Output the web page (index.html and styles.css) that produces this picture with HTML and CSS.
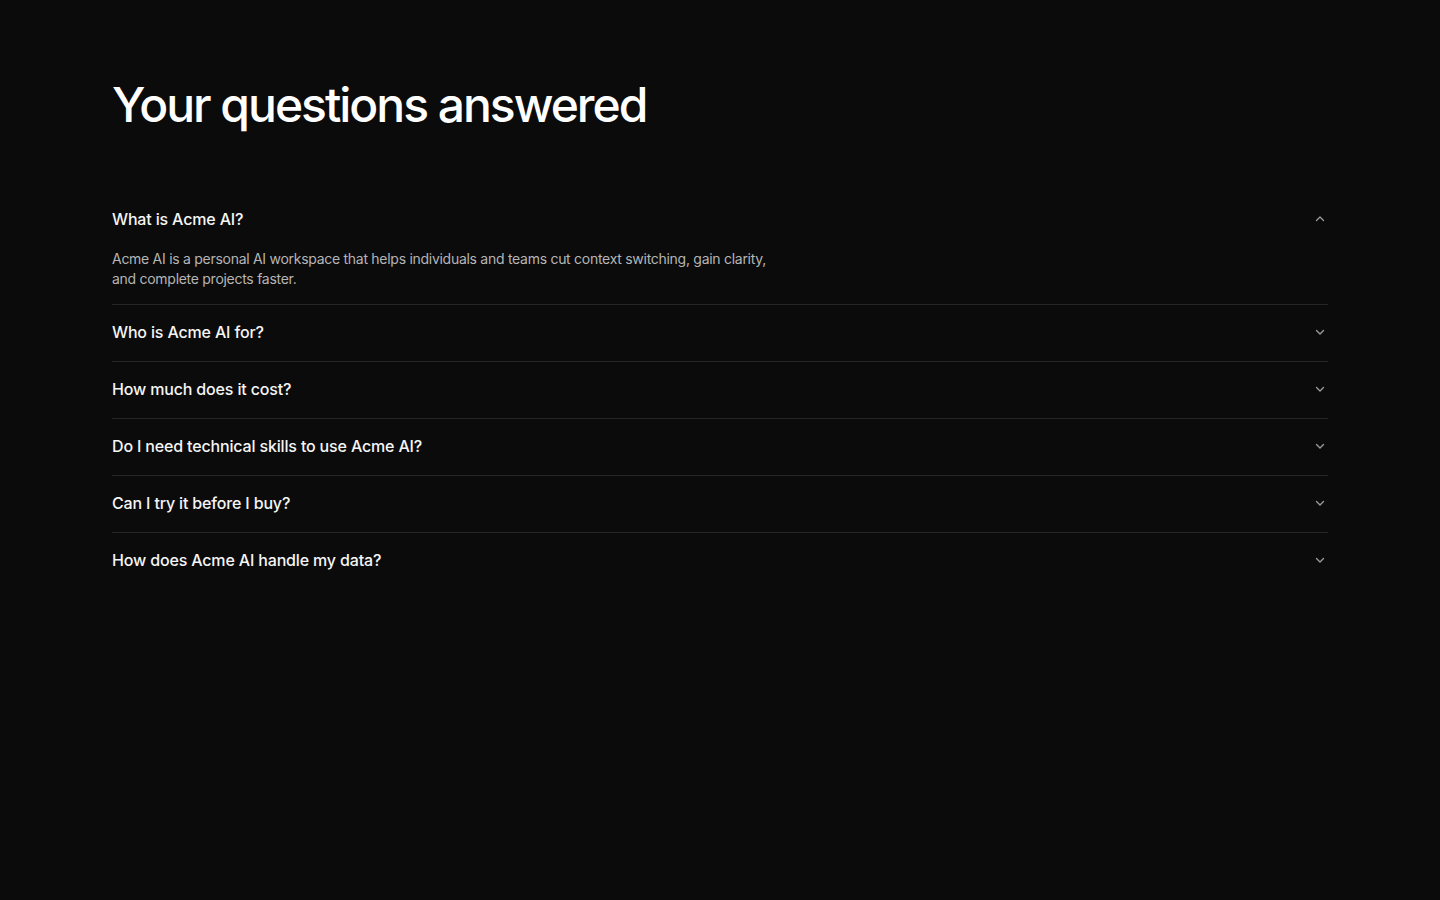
FILE: index.html
```html
<!DOCTYPE html>
<html lang="en">
<head>
<meta charset="utf-8">
<title>FAQ</title>
<link rel="stylesheet" href="styles.css">
</head>
<body>
<section class="faq">
  <h1 class="faq-title">Your questions answered</h1>
  <div class="faq-list">
    <div class="faq-item open">
      <div class="faq-q">
        <span>What is Acme AI?</span>
        <svg class="chev" viewBox="0 0 12 12" width="12" height="12"><path d="M2.5 7.5 6 4l3.5 3.5"/></svg>
      </div>
      <p class="faq-a">Acme AI is a personal AI workspace that helps individuals and teams cut context switching, gain clarity, and complete projects faster.</p>
    </div>
    <div class="faq-item">
      <div class="faq-q">
        <span>Who is Acme AI for?</span>
        <svg class="chev" viewBox="0 0 12 12" width="12" height="12"><path d="M2.5 4.5 6 8l3.5-3.5"/></svg>
      </div>
    </div>
    <div class="faq-item">
      <div class="faq-q">
        <span>How much does it cost?</span>
        <svg class="chev" viewBox="0 0 12 12" width="12" height="12"><path d="M2.5 4.5 6 8l3.5-3.5"/></svg>
      </div>
    </div>
    <div class="faq-item">
      <div class="faq-q">
        <span>Do I need technical skills to use Acme AI?</span>
        <svg class="chev" viewBox="0 0 12 12" width="12" height="12"><path d="M2.5 4.5 6 8l3.5-3.5"/></svg>
      </div>
    </div>
    <div class="faq-item">
      <div class="faq-q">
        <span>Can I try it before I buy?</span>
        <svg class="chev" viewBox="0 0 12 12" width="12" height="12"><path d="M2.5 4.5 6 8l3.5-3.5"/></svg>
      </div>
    </div>
    <div class="faq-item">
      <div class="faq-q">
        <span>How does Acme AI handle my data?</span>
        <svg class="chev" viewBox="0 0 12 12" width="12" height="12"><path d="M2.5 4.5 6 8l3.5-3.5"/></svg>
      </div>
    </div>
  </div>
</section>
</body>
</html>
```

FILE: styles.css
```css
html, body {
  margin: 0;
  padding: 0;
  background: #0b0b0b;
  color: #ffffff;
  font-family: Inter, "Liberation Sans", sans-serif;
  -webkit-font-smoothing: antialiased;
}

.faq {
  padding: 76px 112px 0;
}

.faq-title {
  margin: 0 0 57px;
  font-size: 48px;
  line-height: 58px;
  font-weight: 500;
  letter-spacing: -0.042em;
  color: #ffffff;
}

.faq-list {
  display: flex;
  flex-direction: column;
}

.faq-item {
  border-bottom: 1px solid #262626;
}

.faq-item:last-child {
  border-bottom: none;
}

.faq-q {
  display: flex;
  align-items: center;
  justify-content: space-between;
  padding: 18px 0;
  font-size: 16px;
  line-height: 20px;
  font-weight: 500;
  letter-spacing: -0.01em;
  color: #f5f5f5;
}

.faq-item + .faq-item .faq-q {
  padding: 17px 0 19px;
}

.chev {
  margin-right: 2px;
  fill: none;
  stroke: #9a9a9a;
  stroke-width: 1.4;
  stroke-linecap: round;
  stroke-linejoin: round;
}

.faq-a {
  margin: 0;
  padding: 2px 0 15px;
  max-width: 670px;
  font-size: 14px;
  line-height: 20px;
  font-weight: 400;
  letter-spacing: -0.02em;
  color: #b5b5b5;
}
```
